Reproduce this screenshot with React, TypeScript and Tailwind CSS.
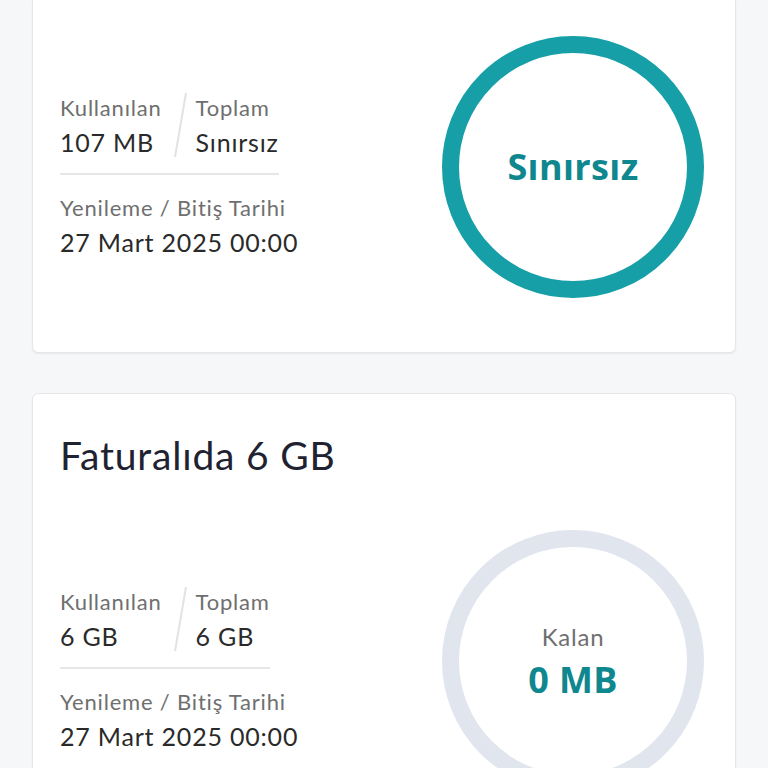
import React from "react";

const FONT = { fontFamily: "Lato, 'Open Sans', sans-serif", letterSpacing: "0.05em" };

function Slash() {
  return (
    <svg width="34" height="68" viewBox="0 0 34 68" className="shrink-0 self-center">
      <line x1="24" y1="2" x2="13" y2="66" stroke="#e2e2e2" strokeWidth="2" />
    </svg>
  );
}

function Info({ used, total }: { used: string; total: string }) {
  return (
    <div className="flex flex-col mt-4">
      <div className="flex w-fit border-b-2 border-[#e6e6e6] pb-[14px]">
        <div className="flex flex-col">
          <span className="text-[22px] leading-[34px] text-[#6f6f6f]">Kullanılan</span>
          <span className="text-[25px] leading-[34px] text-[#2a2a2a]">{used}</span>
        </div>
        <Slash />
        <div className="flex flex-col">
          <span className="text-[22px] leading-[34px] text-[#6f6f6f]">Toplam</span>
          <span className="text-[25px] leading-[34px] text-[#2a2a2a]">{total}</span>
        </div>
      </div>
      <span className="mt-[16px] text-[22px] leading-[34px] text-[#6f6f6f]">Yenileme / Bitiş Tarihi</span>
      <span className="text-[25px] leading-[34px] text-[#2a2a2a]">27 Mart 2025 00:00</span>
    </div>
  );
}

function Ring({ color, children }: { color: string; children: React.ReactNode }) {
  return (
    <div className="relative w-[262px] h-[262px] shrink-0">
      <svg width="262" height="262" viewBox="0 0 262 262" className="absolute inset-0">
        <circle cx="131" cy="131" r="122.5" fill="none" stroke={color} strokeWidth="17" />
      </svg>
      <div className="absolute inset-0 flex flex-col items-center justify-center">{children}</div>
    </div>
  );
}

export default function App() {
  return (
    <div className="min-h-screen bg-[#f6f7f9] overflow-hidden" style={FONT}>
      <div className="px-[32px] flex flex-col gap-[40px]">
        <div className="bg-white rounded-b-[6px] border border-t-0 border-[#e4e6ea] shadow-[0_1px_2px_rgba(0,0,0,0.06)] pl-[27px] pr-[31px] pt-[36px] pb-[54px] flex items-center justify-between">
          <Info used="107 MB" total="Sınırsız" />
          <Ring color="#169fa7">
            <span className="text-[36px] font-bold text-[#0f878e] leading-none" style={{ fontFamily: "'Open Sans', sans-serif", letterSpacing: "0.01em" }}>Sınırsız</span>
          </Ring>
        </div>
        <div className="bg-white rounded-[6px] border border-[#e4e6ea] shadow-[0_1px_2px_rgba(0,0,0,0.06)] pl-[27px] pr-[31px] pt-[37px] pb-[54px] flex flex-col">
          <h2 className="text-[39px] leading-[48px] text-[#1e2231]">Faturalıda 6 GB</h2>
          <div className="mt-[51px] flex items-center justify-between">
            <Info used="6 GB" total="6 GB" />
            <Ring color="#e1e5ee">
              <span className="text-[24px] text-[#6f6f6f] leading-[34px]">Kalan</span>
              <span className="text-[36px] font-bold text-[#0f878e] leading-[44px] mt-[4px]" style={{ fontFamily: "'Open Sans', sans-serif", letterSpacing: "0.01em" }}>0 MB</span>
            </Ring>
          </div>
        </div>
      </div>
    </div>
  );
}
